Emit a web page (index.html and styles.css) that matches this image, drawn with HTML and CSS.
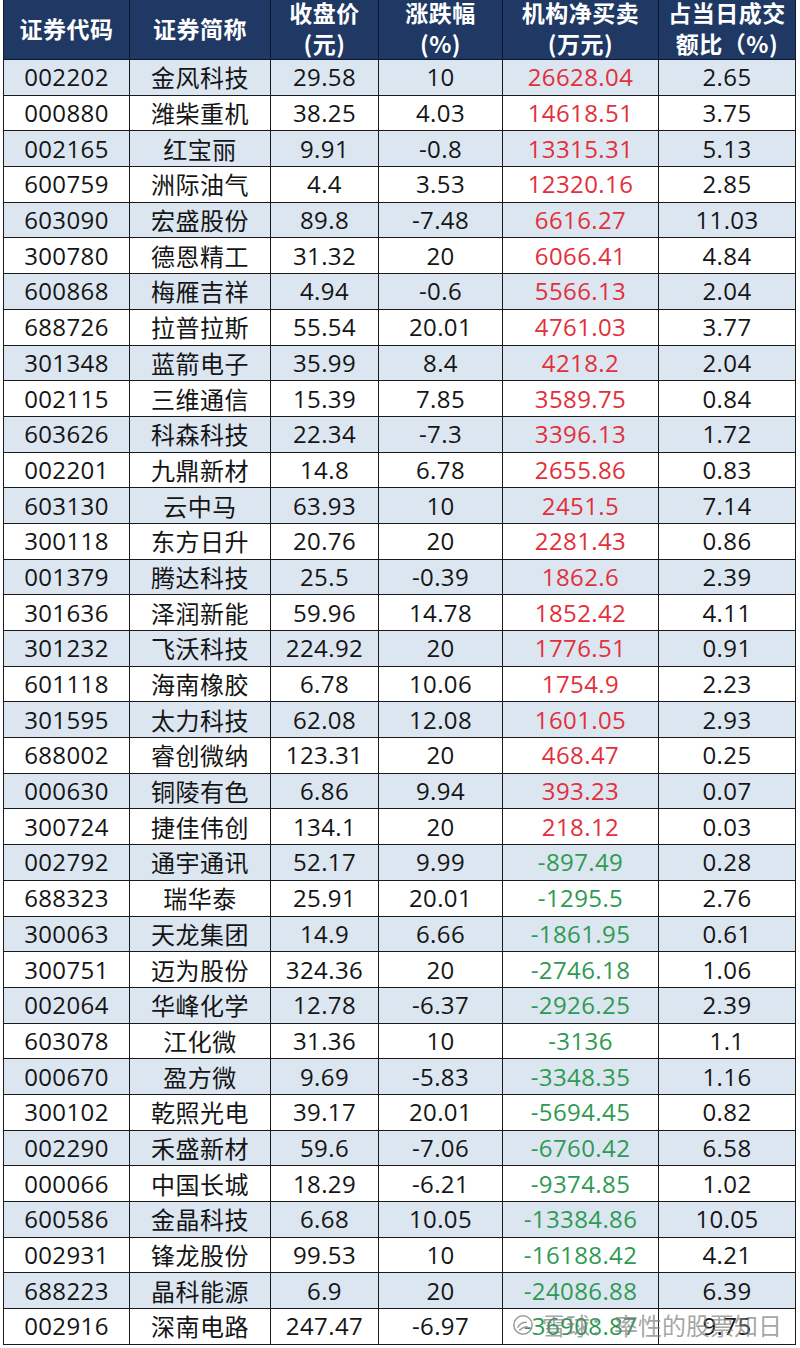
FILE: index.html
```html
<!DOCTYPE html>
<html lang="zh">
<head>
<meta charset="utf-8">
<link rel="stylesheet" href="styles.css">
</head>
<body>
<div class="sheet">
<div class="grid">
<div class="th">证券代码</div><div class="th">证券简称</div><div class="th">收盘价<br>(元)</div><div class="th">涨跌幅<br>(%)</div><div class="th">机构净买卖<br>(万元)</div><div class="th">占当日成交<br>额比（%)</div>
<div class="row"><span>002202</span><span class="zh">金风科技</span><span>29.58</span><span>10</span><span class="up">26628.04</span><span>2.65</span></div>
<div class="row"><span>000880</span><span class="zh">潍柴重机</span><span>38.25</span><span>4.03</span><span class="up">14618.51</span><span>3.75</span></div>
<div class="row"><span>002165</span><span class="zh">红宝丽</span><span>9.91</span><span>-0.8</span><span class="up">13315.31</span><span>5.13</span></div>
<div class="row"><span>600759</span><span class="zh">洲际油气</span><span>4.4</span><span>3.53</span><span class="up">12320.16</span><span>2.85</span></div>
<div class="row"><span>603090</span><span class="zh">宏盛股份</span><span>89.8</span><span>-7.48</span><span class="up">6616.27</span><span>11.03</span></div>
<div class="row"><span>300780</span><span class="zh">德恩精工</span><span>31.32</span><span>20</span><span class="up">6066.41</span><span>4.84</span></div>
<div class="row"><span>600868</span><span class="zh">梅雁吉祥</span><span>4.94</span><span>-0.6</span><span class="up">5566.13</span><span>2.04</span></div>
<div class="row"><span>688726</span><span class="zh">拉普拉斯</span><span>55.54</span><span>20.01</span><span class="up">4761.03</span><span>3.77</span></div>
<div class="row"><span>301348</span><span class="zh">蓝箭电子</span><span>35.99</span><span>8.4</span><span class="up">4218.2</span><span>2.04</span></div>
<div class="row"><span>002115</span><span class="zh">三维通信</span><span>15.39</span><span>7.85</span><span class="up">3589.75</span><span>0.84</span></div>
<div class="row"><span>603626</span><span class="zh">科森科技</span><span>22.34</span><span>-7.3</span><span class="up">3396.13</span><span>1.72</span></div>
<div class="row"><span>002201</span><span class="zh">九鼎新材</span><span>14.8</span><span>6.78</span><span class="up">2655.86</span><span>0.83</span></div>
<div class="row"><span>603130</span><span class="zh">云中马</span><span>63.93</span><span>10</span><span class="up">2451.5</span><span>7.14</span></div>
<div class="row"><span>300118</span><span class="zh">东方日升</span><span>20.76</span><span>20</span><span class="up">2281.43</span><span>0.86</span></div>
<div class="row"><span>001379</span><span class="zh">腾达科技</span><span>25.5</span><span>-0.39</span><span class="up">1862.6</span><span>2.39</span></div>
<div class="row"><span>301636</span><span class="zh">泽润新能</span><span>59.96</span><span>14.78</span><span class="up">1852.42</span><span>4.11</span></div>
<div class="row"><span>301232</span><span class="zh">飞沃科技</span><span>224.92</span><span>20</span><span class="up">1776.51</span><span>0.91</span></div>
<div class="row"><span>601118</span><span class="zh">海南橡胶</span><span>6.78</span><span>10.06</span><span class="up">1754.9</span><span>2.23</span></div>
<div class="row"><span>301595</span><span class="zh">太力科技</span><span>62.08</span><span>12.08</span><span class="up">1601.05</span><span>2.93</span></div>
<div class="row"><span>688002</span><span class="zh">睿创微纳</span><span>123.31</span><span>20</span><span class="up">468.47</span><span>0.25</span></div>
<div class="row"><span>000630</span><span class="zh">铜陵有色</span><span>6.86</span><span>9.94</span><span class="up">393.23</span><span>0.07</span></div>
<div class="row"><span>300724</span><span class="zh">捷佳伟创</span><span>134.1</span><span>20</span><span class="up">218.12</span><span>0.03</span></div>
<div class="row"><span>002792</span><span class="zh">通宇通讯</span><span>52.17</span><span>9.99</span><span class="down">-897.49</span><span>0.28</span></div>
<div class="row"><span>688323</span><span class="zh">瑞华泰</span><span>25.91</span><span>20.01</span><span class="down">-1295.5</span><span>2.76</span></div>
<div class="row"><span>300063</span><span class="zh">天龙集团</span><span>14.9</span><span>6.66</span><span class="down">-1861.95</span><span>0.61</span></div>
<div class="row"><span>300751</span><span class="zh">迈为股份</span><span>324.36</span><span>20</span><span class="down">-2746.18</span><span>1.06</span></div>
<div class="row"><span>002064</span><span class="zh">华峰化学</span><span>12.78</span><span>-6.37</span><span class="down">-2926.25</span><span>2.39</span></div>
<div class="row"><span>603078</span><span class="zh">江化微</span><span>31.36</span><span>10</span><span class="down">-3136</span><span>1.1</span></div>
<div class="row"><span>000670</span><span class="zh">盈方微</span><span>9.69</span><span>-5.83</span><span class="down">-3348.35</span><span>1.16</span></div>
<div class="row"><span>300102</span><span class="zh">乾照光电</span><span>39.17</span><span>20.01</span><span class="down">-5694.45</span><span>0.82</span></div>
<div class="row"><span>002290</span><span class="zh">禾盛新材</span><span>59.6</span><span>-7.06</span><span class="down">-6760.42</span><span>6.58</span></div>
<div class="row"><span>000066</span><span class="zh">中国长城</span><span>18.29</span><span>-6.21</span><span class="down">-9374.85</span><span>1.02</span></div>
<div class="row"><span>600586</span><span class="zh">金晶科技</span><span>6.68</span><span>10.05</span><span class="down">-13384.86</span><span>10.05</span></div>
<div class="row"><span>002931</span><span class="zh">锋龙股份</span><span>99.53</span><span>10</span><span class="down">-16188.42</span><span>4.21</span></div>
<div class="row"><span>688223</span><span class="zh">晶科能源</span><span>6.9</span><span>20</span><span class="down">-24086.88</span><span>6.39</span></div>
<div class="row"><span>002916</span><span class="zh">深南电路</span><span>247.47</span><span>-6.97</span><span class="down">-36908.87</span><span>9.75</span></div>
</div>
<div class="watermark">
<svg class="wm-logo" viewBox="0 0 24 24" width="22" height="22"><circle cx="12" cy="12" r="10" fill="none" stroke="#9a9a9a" stroke-width="1.6"/><path d="M6 15c2-4 5-6 10-6M8 18c3-3 6-4 9-4" fill="none" stroke="#9a9a9a" stroke-width="1.6"/></svg>
<span>雪球：率性的股票知日</span>
</div>
</div>
</body>
</html>
```

FILE: styles.css
```css
html, body {
  margin: 0;
  padding: 0;
  background: #ffffff;
}
body {
  width: 800px;
  height: 1348px;
  overflow: hidden;
}
.sheet {
  position: relative;
  margin-top: -3px;
  padding-left: 3px;
}
.grid {
  display: grid;
  grid-template-columns: 126px 141px 108px 124px 156px 137px;
  grid-template-rows: 63px;
  grid-auto-rows: 35.69px;
  width: 792px;
  border-left: 1px solid #1a1a1a;
  font-family: "Open Sans", "Noto Sans CJK SC", sans-serif;
  font-size: 24px;
  color: #151515;
}
.th {
  box-sizing: border-box;
  background: #1f3864;
  color: #ffffff;
  font-family: "Noto Sans CJK SC", sans-serif;
  font-weight: 700;
  font-size: 23px;
  line-height: 31px;
  border-right: 1px solid #0b1730;
  border-bottom: 1px solid #0b1730;
  display: flex;
  align-items: center;
  justify-content: center;
  text-align: center;
  white-space: nowrap;
  letter-spacing: 0.5px;
}
.row {
  display: contents;
}
.row span {
  box-sizing: border-box;
  border-right: 1px solid #1a1a1a;
  border-bottom: 1px solid #1a1a1a;
  display: flex;
  align-items: center;
  justify-content: center;
  line-height: 1;
  white-space: nowrap;
  letter-spacing: 0.4px;
  background: #ffffff;
}
.row:nth-child(odd of .row) span {
  background: #dce6f1;
}
.row span.zh {
  font-family: "Noto Sans CJK SC", sans-serif;
  font-size: 24px;
  letter-spacing: 0.5px;
}
.row span.up {
  color: #e2303a;
}
.row span.down {
  color: #2e9a52;
}
.watermark {
  position: absolute;
  left: 512px;
  top: 1316px;
  display: flex;
  align-items: center;
  gap: 8px;
  color: rgba(125, 125, 125, 0.7);
  font-family: "Noto Sans CJK SC", sans-serif;
  font-size: 24px;
  line-height: 1;
  pointer-events: none;
}
```
